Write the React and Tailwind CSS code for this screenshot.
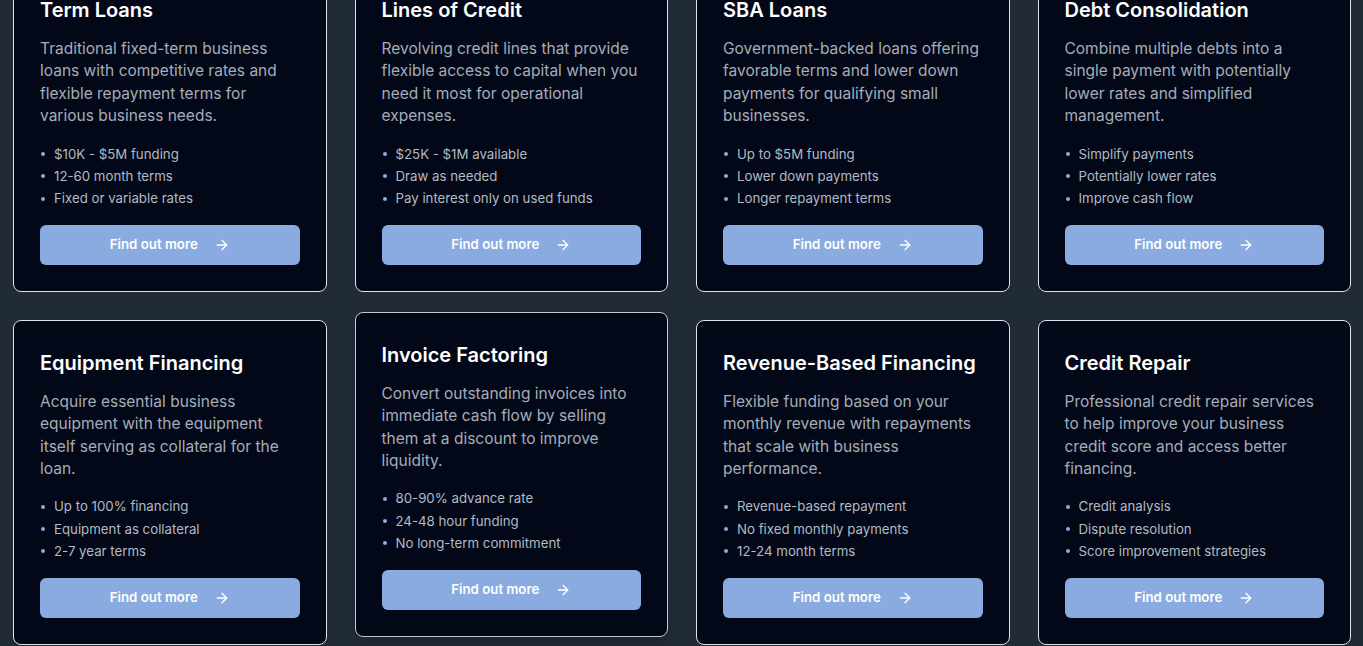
import { ArrowRight } from "lucide-react";

const products = [
  {
    title: "Term Loans",
    text: "Traditional fixed-term business loans with competitive rates and flexible repayment terms for various business needs.",
    points: ["$10K - $5M funding", "12-60 month terms", "Fixed or variable rates"],
  },
  {
    title: "Lines of Credit",
    text: "Revolving credit lines that provide flexible access to capital when you need it most for operational expenses.",
    points: ["$25K - $1M available", "Draw as needed", "Pay interest only on used funds"],
  },
  {
    title: "SBA Loans",
    text: "Government-backed loans offering favorable terms and lower down payments for qualifying small businesses.",
    points: ["Up to $5M funding", "Lower down payments", "Longer repayment terms"],
  },
  {
    title: "Debt Consolidation",
    text: "Combine multiple debts into a single payment with potentially lower rates and simplified management.",
    points: ["Simplify payments", "Potentially lower rates", "Improve cash flow"],
  },
  {
    title: "Equipment Financing",
    text: "Acquire essential business equipment with the equipment itself serving as collateral for the loan.",
    points: ["Up to 100% financing", "Equipment as collateral", "2-7 year terms"],
  },
  {
    title: "Invoice Factoring",
    text: "Convert outstanding invoices into immediate cash flow by selling them at a discount to improve liquidity.",
    points: ["80-90% advance rate", "24-48 hour funding", "No long-term commitment"],
    lifted: true,
  },
  {
    title: "Revenue-Based Financing",
    text: "Flexible funding based on your monthly revenue with repayments that scale with business performance.",
    points: ["Revenue-based repayment", "No fixed monthly payments", "12-24 month terms"],
  },
  {
    title: "Credit Repair",
    text: "Professional credit repair services to help improve your business credit score and access better financing.",
    points: ["Credit analysis", "Dispute resolution", "Score improvement strategies"],
  },
];

function ProductCard({ title, text, points, lifted }) {
  return (
    <div
      className={
        "flex flex-col rounded-lg border bg-[#020817] px-[26px] pt-7 pb-[26px] " +
        (lifted
          ? "-translate-y-2 border-[#c4c8cf] shadow-lg"
          : "border-[#dfe2e6]")
      }
    >
      <h3 className="mb-[14px] text-xl font-semibold leading-7 text-white">{title}</h3>
      <p className="mb-[15px] text-[15.5px] leading-[22.4px] text-[#a6adb8]">{text}</p>
      <ul className="mb-[15px] text-[13.25px] leading-[22.4px] text-[#b4bac4]">
        {points.map((p) => (
          <li key={p} className="flex items-center">
            <span className="ml-[1px] mr-[9px] h-1 w-1 shrink-0 rounded-full bg-[#8aaae0]" />
            {p}
          </li>
        ))}
      </ul>
      <button className="mt-auto flex h-10 w-full items-center justify-center gap-4 rounded-md bg-[#8aabdf] text-[13.25px] font-semibold text-white">
        Find out more
        <ArrowRight size={16} strokeWidth={2} />
      </button>
    </div>
  );
}

export default function App() {
  return (
    <div
      className="min-h-screen overflow-hidden bg-[#212a37]"
      style={{ fontFamily: "Inter, 'Noto Sans', sans-serif" }}
    >
      <div className="-mt-[33px] grid grid-cols-4 gap-x-7 gap-y-7 pl-[13px] pr-3">
        {products.map((p) => (
          <ProductCard key={p.title} {...p} />
        ))}
      </div>
    </div>
  );
}
